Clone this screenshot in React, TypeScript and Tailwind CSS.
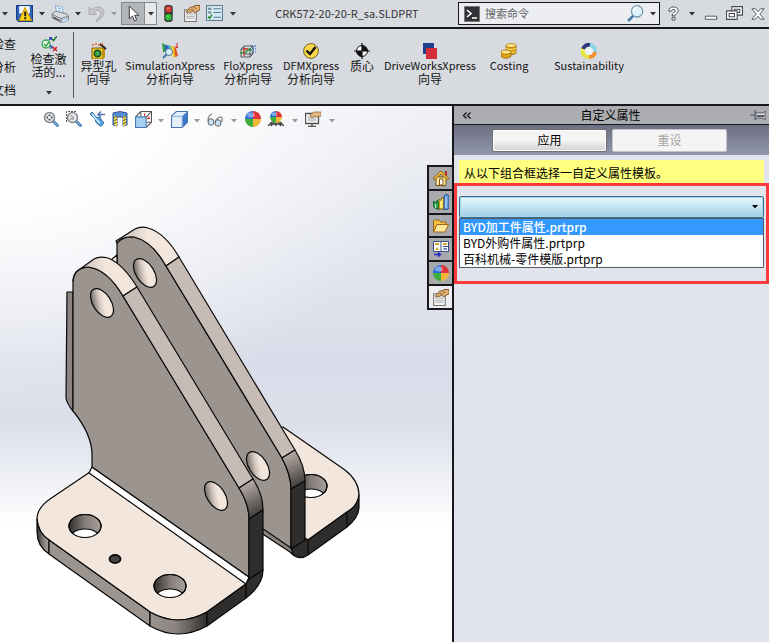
import type { ReactNode } from 'react';

const templates = ['BYD加工件属性.prtprp', 'BYD外购件属性.prtprp', '百科机械-零件模版.prtprp'];

function Caret({ className = 'text-[#333]' }: { className?: string }) {
  return (
    <svg className={`shrink-0 ${className}`} width="6" height="4" viewBox="0 0 6 4" fill="currentColor">
      <path d="M0 0h6L3 3.5z" />
    </svg>
  );
}

interface IconProps {
  size?: number;
  children: ReactNode;
}

function Icon({ size = 16, children }: IconProps) {
  return (
    <svg className="shrink-0" width={size} height={size} viewBox="0 0 16 16" fill="none">
      {children}
    </svg>
  );
}

function BallIcon({ scene = false }: { scene?: boolean }) {
  return (
    <Icon>
      {scene && (
        <path d="M0 15l4-4M3 15l3-4M13 15l-3-4M16 15l-4-4M2 13h12M8 10v5" stroke="#444" strokeWidth="1.5" />
      )}
      <g transform={scene ? 'translate(2 0) scale(.75)' : undefined}>
        <path d="M8 8V0a8 8 0 0 0-8 8z" fill="#2f6fd8" />
        <path d="M8 8V0a8 8 0 0 1 8 8z" fill="#e0323a" />
        <path d="M8 8H0a8 8 0 0 0 8 8z" fill="#3fae3c" />
        <path d="M8 8h8a8 8 0 0 1-8 8z" fill="#f2b63a" />
        <ellipse cx="6" cy="4" rx="4" ry="2.5" fill="#fff" opacity=".4" />
      </g>
    </Icon>
  );
}

function PropertiesIcon() {
  return (
    <Icon size={17}>
      <path d="M1.500 4.500h11v11h-11z" fill="#f4f4f4" stroke="#777" />
      <path d="M3 8.500h8M3 10.500h8M3 12.500h8" stroke="#aaa" />
      <path d="M3 6.500L7 2l3-.5 1-1h5v4l-3 1.500-2 1.500-2-2-2 2-1-1-2 1z" fill="#e5b372" stroke="#6d421d" strokeWidth=".8" />
      <path d="M6 5l3-1.500M8 6l3-2M10 2l3 1.500" stroke="#6d421d" strokeWidth=".6" />
    </Icon>
  );
}

function MagnifierIcon({ area = false }: { area?: boolean }) {
  return (
    <Icon>
      {area && <path d="M.5 11V.5H11" stroke="#555" strokeDasharray="2 1" />}
      <path d="M10.500 10.500l4 4" stroke="#3d74b8" strokeWidth="2.800" strokeLinecap="round" />
      <path d="M10.500 10.500l4 4" stroke="#9cc7ec" strokeLinecap="round" />
      <circle cx="6.500" cy="6.500" r="5" fill="#e4e7ea" stroke="#85898e" strokeWidth="1.500" />
      {area ? (
        <path d="M4 5h2M7 5v3M4 8h4" stroke="#888" />
      ) : (
        <path d="M6.500 3l1.500 2H5zM6.500 10L5 8h3zM3 6.500L5 5v3zM10 6.500L8 5v3z" fill="#555" />
      )}
    </Icon>
  );
}

function TitleBar() {
  return (
    <header className="flex h-[29px] shrink-0 items-center border-b-2 border-[#17171c] bg-[#d7dadf] pl-[2px]">
      <Caret />
      <button aria-label="保存" className="ml-2">
        <Icon size={17}>
          <path d="M.5.5h15v15H2.500l-2-2z" fill="#2d65bd" stroke="#173e85" />
          <path d="M3 1h10v7H3z" fill="#f3f6fb" />
          <path d="M8.500 2.500L3 14.500h11.500z" fill="#ffd91a" stroke="#d39b00" />
          <path d="M8.700 6v4.500M8.700 11.500v1.800" stroke="#111" strokeWidth="1.800" />
        </Icon>
      </button>
      <Caret className="ml-[6px] text-[#333]" />
      <button aria-label="打印" className="ml-[6px]">
        <Icon size={18}>
          <path d="M4 .5l6 1.500 1 6-6-1z" fill="#fff" stroke="#5f9bd6" strokeWidth=".7" />
          <path d="M5.500 2.500l3.500 1M6 4.500l3.500 1" stroke="#5796cf" strokeWidth=".7" />
          <path d="M1 8l3-2.500L14 8l1.500 2v3L9 15.500 1 11.500z" fill="#d9dce0" stroke="#6d7176" strokeWidth=".8" />
          <path d="M1 8.500l8 3.500 6.500-2M9 12v3" stroke="#6d7176" strokeWidth=".8" />
          <path d="M2 10.300l6 3v1L2 11.500z" fill="#31343a" />
          <path d="M9 14l5-2 1.500 1.500-5 2z" fill="#e9f3fd" stroke="#5b8fc9" strokeWidth=".5" />
        </Icon>
      </button>
      <Caret className="ml-[6px] text-[#333]" />
      <button aria-label="撤消" className="ml-[7px]">
        <Icon size={17}>
          <path
            d="M1 2v7h7L5.700 6.800C7 5 9 4.300 10.800 5.300c2.500 1.400 1.500 5-2.800 8.700v1.500c6.500-3.500 9-9 5.500-12C10.700 1.200 6.500 1.400 3.500 4.500z"
            fill="#c5c7ca"
            stroke="#a0a2a5"
            strokeWidth=".8"
          />
        </Icon>
      </button>
      <Caret className="ml-[6px] text-[#999]" />
      <div className="ml-1 flex h-[23px] w-[36px] border border-[#85888d]">
        <button aria-label="选择" className="flex w-[22px] items-center justify-center bg-[#b3b6bb]">
          <Icon size={17}>
            <path d="M4 1v12l3-2.500 2 4.500 2-1-2-4.300h4z" fill="#fff" stroke="#333" strokeWidth=".9" />
          </Icon>
        </button>
        <button aria-label="选择选项" className="flex flex-1 items-center justify-center border-l border-[#85888d] bg-[#e6e8ea]">
          <Caret />
        </button>
      </div>
      <button aria-label="重建模型" className="ml-[3px]">
        <Icon size={17}>
          <rect x="4" y="0" width="8" height="16" rx="3" fill="#393b3b" />
          <circle cx="8" cy="4" r="3" fill="#d63a31" />
          <circle cx="8" cy="11.500" r="3" fill="#2dbb30" />
          <path d="M6.500 3h2M6.500 10.500h2" stroke="#fff" opacity=".5" />
        </Icon>
      </button>
      <button aria-label="文件属性" className="ml-[6px]"><PropertiesIcon /></button>
      <button aria-label="选项" className="ml-[6px]">
        <Icon size={17}>
          <path d="M.5.5h15v14H.5z" fill="#d4e8f1" stroke="#5d7c91" />
          <path d="M2 11l1.500 1.500L5.500 9" stroke="#238b39" strokeWidth="1.500" />
          <path d="M2 2.500h3v2H2zM2 6h3v2H2z" fill="#6d8797" />
          <path d="M7 3.500h7M7 7h7M7 11.500h7" stroke="#557d95" />
        </Icon>
      </button>
      <Caret className="ml-[7px] text-[#333]" />
      <h1 className="flex-1 truncate text-center text-[11px] font-normal text-[#363636]">CRK572-20-20-R_sa.SLDPRT</h1>
      <label className="flex h-[23px] w-[202px] items-center border border-[#17171c] bg-[#eceef1] pl-[5px]">
        <Icon>
          <path d="M.5.5h15v15H.5z" fill="#303236" stroke="#777" />
          <path d="M3 4l4 3.500L3 11M8 12h5" stroke="#fff" strokeWidth="1.600" />
        </Icon>
        <input
          aria-label="搜索命令"
          placeholder="搜索命令"
          className="ml-[5px] w-0 flex-1 bg-transparent text-[11px] text-[#555] outline-none placeholder:text-[#666]"
        />
        <Icon size={17}>
          <path d="M6 10l-5 5" stroke="#437dac" strokeWidth="2.500" />
          <circle cx="9.500" cy="6" r="5.300" fill="#dff1fa" stroke="#7698ad" strokeWidth="1.200" />
          <path d="M6 5q1-3 4-3" stroke="#fff" strokeWidth="1.500" />
        </Icon>
        <Caret className="mr-[3px] ml-[6px] text-[#333]" />
      </label>
      <button aria-label="帮助" className="ml-[6px]">
        <Icon size={15}>
          <path
            d="M3 5.500C3 2.500 5 1 8 1s5 1.500 5 4.200c0 3-3.500 3-3.500 5.300h-3C6.500 7.200 10 7.200 10 5.200 10 3.200 6 3 5.800 5.500zM6.500 12h3v3h-3z"
            fill="#fff"
            stroke="#444854"
          />
        </Icon>
      </button>
      <Caret className="ml-[8px] text-[#333]" />
      <button aria-label="最小化" className="ml-[9px]">
        <Icon size={14}><path d="M1.500 10.500h13v3.500h-13z" fill="#fff" stroke="#444854" /></Icon>
      </button>
      <button aria-label="还原" className="ml-2">
        <Icon size={17}>
          <path d="M5.500 1.500h10v8h-10zM8 4h5v3H8z" fill="#fff" stroke="#444854" />
          <path d="M.5 5.500h10v8H.5zM3 8h5v3H3z" fill="#fff" stroke="#444854" />
        </Icon>
      </button>
      <button aria-label="关闭" className="mr-1 ml-2">
        <Icon size={14}>
          <path d="M1 2h4l3 3.500L11 2h4l-5 6 5 6h-4L8 10.500 5 14H1l5-6z" fill="#fff" stroke="#444854" />
        </Icon>
      </button>
    </header>
  );
}

interface CommandProps {
  name: string;
  detail?: string;
  className: string;
  children: ReactNode;
}

function Command({ name, detail, className, children }: CommandProps) {
  return (
    <button className={`flex h-full shrink-0 flex-col items-center pt-[11px] text-xs whitespace-nowrap ${className}`}>
      <Icon>{children}</Icon>
      <span className="leading-[13px]">{name}</span>
      {detail && <span className="text-xs leading-[13px]">{detail}</span>}
    </button>
  );
}

function Ribbon() {
  return (
    <nav className="flex h-[77px] shrink-0 items-start overflow-hidden border-b-2 border-[#17171c] bg-[#d7dadf] pt-[3px] text-[#151515]">
      <div className="flex w-4 shrink-0 flex-col items-end text-xs">
        <button className="h-[23px] whitespace-nowrap">检查</button>
        <button className="h-[23px] whitespace-nowrap">分析</button>
        <button className="h-[23px] whitespace-nowrap">文档</button>
      </div>
      <button className="flex w-[57px] shrink-0 flex-col items-center pt-1 pl-2 text-xs leading-[13px]">
        <Icon>
          <circle cx="5" cy="8" r="4" fill="#e9f7ec" stroke="#35a650" strokeWidth="1.300" />
          <path d="M3 8l2 2 3-4" stroke="#35a650" strokeWidth="1.500" />
          <path d="M11 3l1.500 1.500L16 0" stroke="#237b2b" strokeWidth="1.500" />
          <path d="M8 4l2-2M8 1.500h2.500V4M9 9.500l2 2M8.500 12H11V9.500" stroke="#254cae" strokeWidth="1.200" />
          <path d="M12 11l4 4M16 11l-4 4" stroke="#d51f24" strokeWidth="1.500" />
        </Icon>
        <span>检查激</span>
        <span>活的...</span>
        <Caret className="mt-[13px] text-[#333]" />
      </button>
      <div className="h-[66px] w-px shrink-0 bg-[#55585d]" />
      <Command name="异型孔" detail="向导" className="ml-[2px] w-[45px]">
        <path d="M1 5h11v11H1z" fill="#fbd321" stroke="#7b5b00" />
        <path d="M12 5l2-2v11l-2 2z" fill="#c68e0b" />
        <circle cx="6.500" cy="10.500" r="3.200" fill="#3eac47" stroke="#244c29" strokeWidth="1.500" />
        <path d="M9 1l6 5" stroke="#222" strokeWidth="1.800" />
        <path d="M2 1v2M5 0v2M8 1v2M11 0v2" stroke="#ef5b23" strokeWidth="1.500" />
      </Command>
      <Command name="SimulationXpress" detail="分析向导" className="w-[98px] text-[11px]">
        <path d="M0 0l5 2.500 4 .5-2 5-6 1z" fill="#2c9b41" />
        <path d="M3 2l5 1-1 5-4-1z" fill="#2f62cc" />
        <path d="M6 3l4 .5 1 5-4-1z" fill="#3dbccb" />
        <path d="M9 3l3 .5 2 10-3 1z" fill="#f5d02c" />
        <path d="M12 3.500l2 1.500 2 8-3 1z" fill="#e2532a" />
        <path d="M15 0v5M13.500 3.500L15 5l1-1.500" stroke="#d32020" />
        <circle cx="7" cy="9" r="3.500" fill="#d5effa" stroke="#507792" />
        <path d="M4.500 11.500L1 15" stroke="#3976ae" strokeWidth="2" />
      </Command>
      <Command name="FloXpress" detail="分析向导" className="w-[58px] text-[11px]">
        <path d="M1 6l3-3h9v8l-3 3H1zM4 3v8h9M10 6v8M1 6h9l3-3" stroke="#555" />
        <path d="M0 10h5l3-3h4" stroke="#1f9c3d" strokeWidth="1.500" />
        <path d="M4 13V6h4" stroke="#d93a2f" strokeWidth="1.300" />
        <path d="M11 3h5M12 6h4M12 9h4" stroke="#2c62d4" strokeDasharray="2 1" />
      </Command>
      <Command name="DFMXpress" detail="分析向导" className="w-[68px] text-[11px]">
        <circle cx="8" cy="8" r="7.400" fill="#fbd649" stroke="#6f6330" />
        <path d="M3.500 7.500L7 11l5.500-7" stroke="#111" strokeWidth="2.400" />
      </Command>
      <Command name="质心" className="w-[34px]">
        <circle cx="8" cy="8" r="5.500" fill="#fff" stroke="#111" />
        <path d="M8 8V2.500A5.500 5.500 0 0 1 13.500 8zM8 8H2.500A5.500 5.500 0 0 0 8 13.500z" fill="#111" />
        <path d="M8 0v16M0 8h16" stroke="#111" strokeWidth="1.200" />
      </Command>
      <Command name="DriveWorksXpress" detail="向导" className="w-[102px] text-[11px]">
        <path d="M1 0h11v11H1z" fill="#1e3d8d" />
        <path d="M4 5h11v11H4z" fill="#d42d3b" />
      </Command>
      <Command name="Costing" className="w-[56px] text-[11px]">
        <path d="M5 2v8c1 2 9 2 10 0V2z" fill="#d79a13" stroke="#8e5d00" strokeWidth=".7" />
        <ellipse cx="10" cy="2.500" rx="5" ry="2" fill="#ffe887" stroke="#a36b00" strokeWidth=".7" />
        <path d="M5 5c1 2 9 2 10 0M5 8c1 2 9 2 10 0" stroke="#fff07c" />
        <path d="M0 9v4c1 3 9 3 10 0V9z" fill="#dfa11d" stroke="#8e5d00" strokeWidth=".7" />
        <ellipse cx="5" cy="9" rx="5" ry="2" fill="#ffe887" stroke="#a36b00" strokeWidth=".7" />
      </Command>
      <Command name="Sustainability" className="w-[104px] text-[11px]">
        <circle cx="8" cy="8" r="5" fill="#eef3f6" />
        <path d="M2 6a6 6 0 0 1 7-4" stroke="#2e367e" strokeWidth="4" />
        <path d="M9 2a6 6 0 0 1 5 7" stroke="#8fd3ea" strokeWidth="4" />
        <path d="M14 9a6 6 0 0 1-6 5" stroke="#f19128" strokeWidth="4" />
        <path d="M8 14a6 6 0 0 1-6-8" stroke="#eae441" strokeWidth="4" />
      </Command>
    </nav>
  );
}

function ViewToolbar() {
  return (
    <div className="flex h-[59px] items-start pt-[5px] pl-[43px]">
      <button aria-label="整屏显示全图"><MagnifierIcon /></button>
      <button aria-label="局部放大" className="ml-[7px]"><MagnifierIcon area /></button>
      <button aria-label="上一视图" className="ml-[7px]">
        <Icon>
          <path d="M1 3l2-2 4 5 4 1 4 5-3 3.500-5-4-1-3.500z" fill="#5aa3dc" stroke="#3b6f9d" />
          <path d="M3 3l4 5 4 4" stroke="#cfedff" strokeWidth="1.500" />
          <path d="M16 3.500h-6M12 .5L9 3.500l3 3" stroke="#5475b4" strokeWidth="1.500" />
        </Icon>
      </button>
      <button aria-label="剖面视图" className="ml-[7px]">
        <Icon>
          <path d="M1 2q7-3 14 0v12l-4 1V6H5v9l-4-1z" fill="#548ed3" stroke="#31578c" />
          <path d="M2 5h3v10l-3-1zM11 5h3v9l-3 1z" fill="#ffe25a" />
          <path d="M2 7l3-2M2 10l3-2M2 13l3-2M11 7l3-2M11 10l3-2M11 13l3-2" stroke="#5d5422" />
        </Icon>
      </button>
      <button aria-label="视图定向" className="ml-[7px]">
        <Icon size={17}>
          <path d="M.5 5.500L5.500.5h10v10l-5 5H.5z" fill="#fff" stroke="#555" />
          <path d="M.5 5.500h10v10H.5z" fill="#a5d0f2" stroke="#4779b0" />
          <path d="M10.500 5.500l5-5M5.500 1v4M11 10.500h4" stroke="#555" />
          <path d="M9 2v3M13 5v3M11 7h3" stroke="#d33" />
        </Icon>
      </button>
      <Caret className="mt-2 ml-[6px] text-[#999]" />
      <button aria-label="显示样式" className="ml-[7px]">
        <Icon size={17}>
          <path d="M.5 4.500L5 .5h10.500v10l-5 5H.5z" fill="#e3f0fb" stroke="#4773aa" />
          <path d="M10.500 5l5-4.500v10l-5 5z" fill="#3d77c9" />
          <path d="M.5 5h10v10.500" stroke="#8badd1" />
        </Icon>
      </button>
      <Caret className="mt-2 ml-[6px] text-[#999]" />
      <button aria-label="隐藏/显示项目" className="ml-[7px]">
        <Icon>
          <path d="M1 10Q1 4 5 3M8 11q1-3 3-4 3-2 4 0v4" stroke="#777" strokeWidth="1.200" />
          <ellipse cx="4" cy="11" rx="3" ry="3.300" fill="#c6e2f3" stroke="#666" />
          <ellipse cx="11" cy="12" rx="3" ry="3.300" fill="#c6e2f3" stroke="#666" />
        </Icon>
      </button>
      <Caret className="mt-2 ml-[8px] text-[#999]" />
      <button aria-label="编辑外观" className="ml-2"><BallIcon /></button>
      <button aria-label="应用布景" className="ml-[7px]"><BallIcon scene /></button>
      <Caret className="mt-2 ml-[8px] text-[#999]" />
      <button aria-label="视图设定" className="ml-[7px]">
        <Icon>
          <path d="M.5 2.500h13v10H.5z" fill="#f0f0f0" stroke="#555" strokeWidth="1.300" />
          <path d="M3 5h8v5H3z" fill="#c7c9cb" />
          <path d="M7 13v2M3 15.500h8" stroke="#555" strokeWidth="1.500" />
          <path d="M5 4l4-3h7v4l-4 1-3-1-2 2z" fill="#e6b97f" stroke="#8b5e30" strokeWidth=".7" />
        </Icon>
      </button>
      <Caret className="mt-2 ml-2 text-[#999]" />
    </div>
  );
}

function PlateHole({ x, y }: { x: number; y: number }) {
  return <ellipse rx="9" ry="16" transform={`translate(${x} ${y}) rotate(-33)`} fill="url(#bore)" />;
}

function BaseHole({ x, y, id }: { x: number; y: number; id: string }) {
  return (
    <g>
      <clipPath id={id}><ellipse cx={x} cy={y} rx="16" ry="11.500" /></clipPath>
      <ellipse cx={x} cy={y} rx="16" ry="11.500" fill="url(#well)" />
      <ellipse cx={x} cy={y + 14} rx="16" ry="11" fill="#fff" clipPath={`url(#${id})`} />
      <ellipse cx={x} cy={y} rx="16" ry="11.500" fill="none" />
    </g>
  );
}

function BracketModel() {
  return (
    <svg className="h-auto min-w-0 flex-1 self-start" viewBox="0 165 427 475" role="img" aria-label="CRK572-20-20-R_sa">
      <defs>
        <linearGradient id="bore" x1="0" y1=".1" x2=".8" y2=".7">
          <stop offset="0" stopColor="#4a4643" />
          <stop offset=".5" stopColor="#cfc3bb" />
          <stop offset=".75" stopColor="#f3e6dd" />
        </linearGradient>
        <linearGradient id="well">
          <stop offset="0" stopColor="#302e2d" />
          <stop offset=".5" stopColor="#847d79" />
          <stop offset="1" stopColor="#a8a09b" />
        </linearGradient>
        <linearGradient id="cap">
          <stop offset="0" stopColor="#bcb0aa" />
          <stop offset=".5" stopColor="#f3e6dd" />
          <stop offset="1" stopColor="#f3e6dd" />
        </linearGradient>
        <linearGradient id="shoulder" x1=".3" y1="0" x2=".6" y2="1">
          <stop offset="0" stopColor="#c3b7b1" />
          <stop offset="1" stopColor="#3a3736" />
        </linearGradient>
        <linearGradient id="corner">
          <stop offset="0" stopColor="#9b938e" />
          <stop offset=".45" stopColor="#8b8480" />
          <stop offset="1" stopColor="#302f2d" />
        </linearGradient>
      </defs>
      <g stroke="#090909" strokeWidth="1.200" strokeLinejoin="round">
        {/* Rear bracket */}
        <path d="M283 427L345 470Q359 481 359 495Q358 506 347 512L308 540L291 548L275 430Z" fill="#f3e6dd" />
        <BaseHole x={311} y={486} id="rear-hole" />
        <path d="M359 495Q358 506 347 512L308 540L305 538L291 549V553Q299 561 308 555L347 527Q359 517 359 507Z" fill="#302e2d" />
        <path d="M347 512V527M308 540V555" />
        <path d="M255 523L291 547L293 554L255 529Z" fill="#8a837e" />
        <path d="M117 243Q123 236 134 237Q152 241 166 266L282 458Q291 475 291 489V548L240 513L117 315Z" fill="#9c958f" />
        <path d="M117 243L116 241L135 229Q141 226 148 228Q165 233 179 257L166 266Q152 241 134 237Q123 236 117 243Z" fill="url(#cap)" />
        <path d="M166 266L179 257L295 450L282 458Z" fill="#c7bbb6" />
        <path d="M282 458L295 450Q305 466 305 481L291 489Q291 475 282 458Z" fill="url(#shoulder)" />
        <path d="M291 489L305 481V540L291 549Z" fill="#302e2d" />
        <PlateHole x={145} y={273} />
        <PlateHole x={258} y={466} />

        {/* Front bracket */}
        <path d="M111 260L117 255V265Z" fill="#f3e6dd" />
        <path d="M67 292H73V411Q67 404 66 398Z" fill="#8b8480" />
        <path d="M90 472L50 499Q37 508 37 519Q38 533 49 540L150 612Q178 628 207 612L246 584L249 579Z" fill="#f3e6dd" />
        <path d="M37 519Q38 533 49 540V554Q37 546 37 532Z" fill="url(#well)" />
        <path d="M49 540L150 612V626L49 554Z" fill="#9b948f" />
        <path d="M150 612Q178 628 207 612V626Q178 642 150 626Z" fill="url(#corner)" />
        <path d="M207 612L246 584V598L207 626Z" fill="#302e2d" />
        <path d="M246 584L249 579L263 570Q263 585 246 598Z" fill="#302e2d" />
        <path d="M92 467L249 577L246 584L89 473Z" fill="#fff" />
        <path d="M73 281Q74 268 88 267Q107 269 123 296L239 488Q249 504 249 519V577L92 467V453Q91 433 73 411Z" fill="#9c958f" />
        <path d="M73 281Q73 276 76 272L94 259Q99 256 108 258Q123 264 137 287L123 296Q107 269 88 267Q74 268 73 281Z" fill="url(#cap)" />
        <path d="M123 296L137 287L253 479L239 488Z" fill="#c7bbb6" />
        <path d="M239 488L253 479Q263 494 263 510L249 519Q249 504 239 488Z" fill="url(#shoulder)" />
        <path d="M249 519L263 510V570L249 579Z" fill="#302e2d" />
        <PlateHole x={102} y={303} />
        <PlateHole x={216} y={496} />
        <BaseHole x={85} y={526} id="front-hole-left" />
        <BaseHole x={170} y={586} id="front-hole-right" />
        <ellipse cx="115" cy="559" rx="5.500" ry="4" fill="#444" strokeWidth="1.800" />
      </g>
    </svg>
  );
}

interface TaskTabProps {
  label: string;
  active?: boolean;
  children: ReactNode;
}

function TaskTab({ label, active, children }: TaskTabProps) {
  return (
    <button
      aria-label={label}
      className={`flex h-6 w-[25px] items-center justify-center border-t-2 border-l-2 border-[#17171c] ${active ? 'bg-[#eceef2]' : 'bg-[#a8a9ac]'}`}
    >
      {children}
    </button>
  );
}

function TaskTabs() {
  return (
    <div className="flex h-[145px] w-[25px] shrink-0 flex-col border-b-2 border-[#17171c]">
      <TaskTab label="SolidWorks 资源">
        <Icon>
          <path d="M3 7h10v8.500H3z" fill="#ffe9a0" stroke="#735213" />
          <path d="M12 1h2v5h-2z" fill="#b52d25" />
          <path d="M0 8.500L8 1l8 7.500-2 1L8 4 2 9.500z" fill="#f4bd34" stroke="#84540f" strokeWidth=".8" />
          <path d="M6.500 9h3.500v6H6.500z" fill="#fff" stroke="#84540f" />
        </Icon>
      </TaskTab>
      <TaskTab label="设计库">
        <Icon>
          <path d="M.5 7l2 2 2-3 1.500 3v6.500l-5-2z" fill="#22a34a" stroke="#135e2a" />
          <path d="M6 5l1.500 1.500L9.500 3 11 5v10H6z" fill="#ffd642" stroke="#806012" />
          <path d="M11 2l1.500-1.500h2L16 2v12l-2 1.500h-3z" fill="#5d9ade" stroke="#254e89" />
          <path d="M2.500 10v4M8 7v7M13 3v11" stroke="#fff" opacity=".8" />
        </Icon>
      </TaskTab>
      <TaskTab label="文件探索器">
        <Icon>
          <path d="M.5 14V3L2 2h4l2 2h5v3H4z" fill="#f6bf42" stroke="#9a6412" />
          <path d="M.5 14L4 6.500h11.500L12 14z" fill="#ffe89d" stroke="#9a6412" />
        </Icon>
      </TaskTab>
      <TaskTab label="视图调色板">
        <Icon>
          <path d="M.5.500h15v10H.5z" fill="#fff" stroke="#374d84" />
          <path d="M8 .5v10M10 5.500h5.500" stroke="#374d84" />
          <path d="M2 3h4M10 3h4" stroke="#d6a624" strokeWidth="2" />
          <path d="M2 9l2-3 2 3z" fill="#d6a624" />
          <path d="M10.500 7h3.500v2h-3.500z" fill="#6e87bd" />
          <path d="M1 13.500h6M5 11.500l2.500 2L5 15.500" stroke="#2027c4" strokeWidth="1.500" />
        </Icon>
      </TaskTab>
      <TaskTab label="外观、布景和贴图"><BallIcon /></TaskTab>
      <TaskTab label="自定义属性" active><PropertiesIcon /></TaskTab>
    </div>
  );
}

function PropertiesPanel() {
  return (
    <aside className="w-[317px] shrink-0 border-l-2 border-[#17171c] bg-[#e1e4ec] text-xs text-black">
      <div className="flex h-[19px] items-center justify-between border-b border-[#17171c] bg-[#acadb0] pr-[3px] pl-2">
        <button aria-label="折叠">
          <svg width="9" height="9" viewBox="0 0 9 9" fill="none" stroke="#111" strokeWidth="1.300">
            <path d="M4.500 1.500l-3 3 3 3M8.500 1.500l-3 3 3 3" />
          </svg>
        </button>
        <h2>自定义属性</h2>
        <button aria-label="固定">
          <Icon>
            <path d="M0 8h5M5 3v10M6 5l2 1h5l2-2v9l-2-2H8l-2 1z" fill="#e5e6ec" stroke="#555762" />
            <path d="M7 9h7" stroke="#555762" strokeWidth="2" />
          </Icon>
        </button>
      </div>
      <div className="flex h-[30px] items-center justify-center gap-[5px] bg-linear-to-b from-[#6d7082] to-[#9196a9] pr-1">
        <button className="h-[23px] w-[115px] rounded-xs border border-[#707070] bg-linear-to-b from-[#f4f4f4] from-50% to-[#d1d1d1] shadow-[inset_0_0_0_1px_#fff]">应用</button>
        <button disabled className="h-[23px] w-[115px] rounded-xs border border-[#c3c4c8] bg-[#f4f4f4] text-[#a5a5a5]">重设</button>
      </div>
      <label htmlFor="template" className="mx-[5px] mt-[5px] block h-[23px] bg-[#ffff80] pl-[5px] leading-[26px]">
        从以下组合框选择一自定义属性模板。
      </label>
      <div className="h-[101px] border-[3px] border-[#fb3b3b] px-[2px] pt-[10px]">
        <div className="grid items-center">
          <select
            id="template"
            defaultValue=""
            className="col-start-1 row-start-1 h-[22px] w-full appearance-none rounded-xs border border-[#3c6d89] bg-linear-to-b from-[#e0f2fb] from-10% via-[#c5e5f5] via-50% to-[#9bcde5] shadow-[inset_0_0_0_1px_#a8d5e9]"
          >
            <option value="" />
            {templates.map(name => <option key={name}>{name}</option>)}
          </select>
          <Caret className="pointer-events-none col-start-1 row-start-1 mr-[6px] justify-self-end text-black" />
        </div>
        <ul role="listbox" aria-label="自定义属性模板" className="h-[50px] border border-[#555c65] bg-white">
          {templates.map((name, i) => (
            <li
              key={name}
              role="option"
              aria-selected={i === 0}
              className="h-4 pl-[3px] leading-4 aria-selected:bg-[#3399ff] aria-selected:font-medium aria-selected:text-white"
            >
              {name}
            </li>
          ))}
        </ul>
      </div>
    </aside>
  );
}

export default function App() {
  return (
    <div className="flex min-h-screen flex-col overflow-hidden bg-[#d7dadf] font-['Noto_Sans_CJK_SC',sans-serif]">
      <TitleBar />
      <Ribbon />
      <div className="flex flex-1">
        <main className="flex min-w-0 flex-1 flex-col bg-[radial-gradient(ellipse_95%_58%_at_top_left,#fff_30%,transparent),linear-gradient(to_bottom,#f0f1f6,#d9dde9_48%,#dce0eb_60%,#fff_78%)]">
          <ViewToolbar />
          <div className="flex items-start">
            <BracketModel />
            <TaskTabs />
          </div>
        </main>
        <PropertiesPanel />
      </div>
    </div>
  );
}
